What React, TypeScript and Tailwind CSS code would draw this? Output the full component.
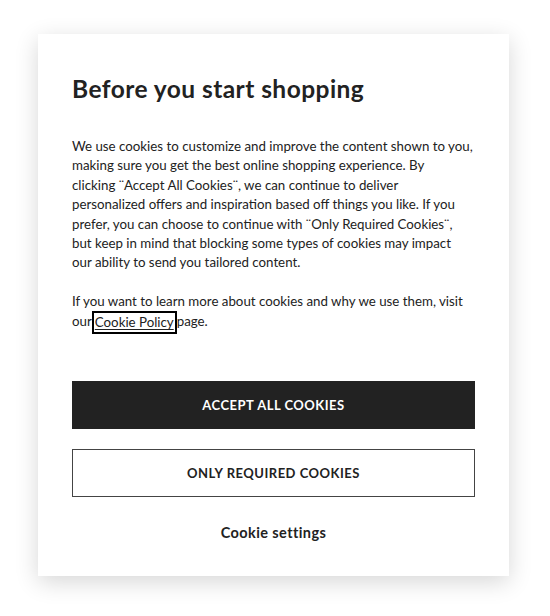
export default function App() {
  return (
    <div className="min-h-[616px] w-[550px] bg-white pl-[38px] pt-[34px] font-['Lato',sans-serif] text-[#222]">
      <div className="flex h-[542px] w-[471px] flex-col bg-white px-[34px] pt-[40px] shadow-[0_6px_22px_rgba(0,0,0,0.16)]">
        <h2 className="text-[24.5px] font-bold leading-[30px] tracking-[0.45px]">Before you start shopping</h2>

        <p className="mt-[33px] text-[13.3px] leading-[19.4px]">
          We use cookies to customize and improve the content shown to you,
          <br />
          making sure you get the best online shopping experience. By
          <br />
          clicking ¨Accept All Cookies¨, we can continue to deliver
          <br />
          personalized offers and inspiration based off things you like. If you
          <br />
          prefer, you can choose to continue with ¨Only Required Cookies¨,
          <br />
          but keep in mind that blocking some types of cookies may impact
          <br />
          our ability to send you tailored content.
        </p>
        <p className="mt-[19px] text-[13.3px] leading-[19.4px]">
          If you want to learn more about cookies and why we use them, visit
          <br />
          our
          <a
            href="#"
            className="inline-block border-2 border-black px-[1px] align-middle leading-[19px] underline underline-offset-2"
          >
            Cookie Policy
          </a>
          page.
        </p>

        <div className="mt-[47px] flex flex-col gap-[20px]">
          <button className="h-[48px] w-full bg-[#222] text-[13px] font-bold tracking-[0.5px] text-white">
            ACCEPT ALL COOKIES
          </button>
          <button className="h-[48px] w-full border border-[#444] bg-white text-[13px] font-bold tracking-[0.5px] text-[#222]">
            ONLY REQUIRED COOKIES
          </button>
        </div>
        <button className="mt-[25px] self-center text-[14.5px] font-bold tracking-[0.4px]">Cookie settings</button>
      </div>
    </div>
  );
}
